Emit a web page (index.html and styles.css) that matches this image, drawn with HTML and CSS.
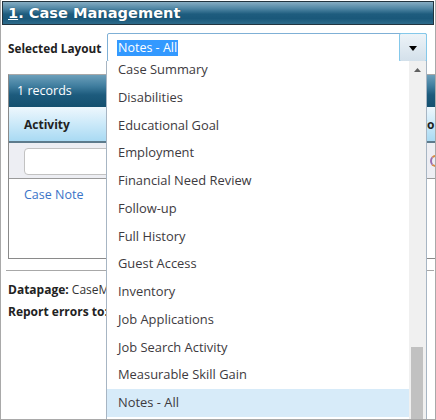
FILE: index.html
```html
<!DOCTYPE html>
<html>
<head>
<meta charset="utf-8">
<link rel="stylesheet" href="styles.css">
</head>
<body>
<div class="page">
  <div class="title"><span class="u">1</span>. Case Management</div>
  <div class="layout-row">
    <span class="label">Selected Layout</span>
    <div class="select">
      <span class="sel-text">Notes - All</span>
      <span class="btn"><svg width="8" height="5" viewBox="0 0 8 5"><path d="M0 0H8L4 5Z" fill="#000"/></svg></span>
    </div>
  </div>
  <div class="grid">
    <div class="grid-bar">1 records</div>
    <div class="grid-head"><div class="col1">Activity</div><div class="col2">To</div></div>
    <div class="grid-filter"><div class="col1"><div class="filter-input"></div></div><div class="col2"><span class="clear-icon"></span></div></div>
    <div class="grid-row"><a class="link">Case Note</a></div>
  </div>
  <div class="sep"></div>
  <div class="footer">
    <div class="fline"><b>Datapage:</b> CaseM</div>
    <div class="fline"><b>Report errors to:</b></div>
  </div>
  <div class="dropdown">
    <div class="list-view">
      <div class="items">
        <div class="item">Case Summary</div>
        <div class="item">Disabilities</div>
        <div class="item">Educational Goal</div>
        <div class="item">Employment</div>
        <div class="item">Financial Need Review</div>
        <div class="item">Follow-up</div>
        <div class="item">Full History</div>
        <div class="item">Guest Access</div>
        <div class="item">Inventory</div>
        <div class="item">Job Applications</div>
        <div class="item">Job Search Activity</div>
        <div class="item">Measurable Skill Gain</div>
        <div class="item active">Notes - All</div>
      </div>
    </div>
    <div class="scroll">
      <div class="arrow"><svg width="7" height="4" viewBox="0 0 7 4"><path d="M0 4L3.5 0L7 4Z" fill="#606060"/></svg></div>
      <div class="thumb"></div>
    </div>
  </div>
</div>
</body>
</html>
```
FILE: styles.css
```css
* { box-sizing: border-box; }
html, body { margin: 0; padding: 0; background: #fff; }
body { font-family: "Open Sans", "Liberation Sans", sans-serif; color: #333; }

.page {
  position: relative;
  width: 436px;
  height: 420px;
  border: 1px solid #a9a9a9;
  border-top: 0;
  padding: 1px 1px 0;
  overflow: hidden;
  background: #fff;
}

.title {
  height: 24px;
  border: 1px solid #22343f;
  background: linear-gradient(to bottom, #86adc3 0%, #4f86a4 30%, #1e5c7e 55%, #1a587a 75%, #2d6b8b 100%);
  color: #fff;
  font-family: "DejaVu Sans", Verdana, sans-serif;
  font-weight: bold;
  font-size: 14.6px;
  line-height: 22px;
  padding-left: 5px;
  text-shadow: 0 0 1px #0c3348;
}
.title .u { text-decoration: underline; }

.layout-row {
  display: flex;
  align-items: center;
  margin-top: 8px;
  height: 29px;
}
.label {
  width: 105px;
  padding-left: 6px;
  font-weight: bold;
  font-size: 11.8px;
  color: #222;
}
.select {
  width: 320px;
  height: 29px;
  border: 1px solid #7fb0d6;
  border-radius: 2px;
  display: flex;
  align-items: center;
  padding-left: 9px;
}
.sel-text {
  background: #3399ff;
  color: #fff;
  font-size: 12.5px;
  line-height: 16px;
  padding: 0 1px;
}
.btn {
  margin: -1px -1px -1px auto;
  width: 28px;
  height: 29px;
  border: 1px solid #84c8ea;
  border-radius: 2px;
  background: linear-gradient(to bottom, #edf3f8, #d3e0ea);
  display: flex;
  align-items: center;
  justify-content: center;
  padding-top: 1px;
}
.btn svg { display: block; }

.grid {
  margin: 12px -20px 0 6px;
  border: 1px solid #8a8a8a;
  border-top-color: #a8a8a8;
}
.grid-bar {
  height: 32px;
  line-height: 32px;
  padding-left: 8px;
  color: #fff;
  font-size: 12.5px;
  background: linear-gradient(to bottom, #6c9fba 0%, #3f7d9e 35%, #1d5b7d 62%, #14506f 100%);
}
.grid-head {
  display: flex;
  height: 36px;
  align-items: center;
  background: linear-gradient(to bottom, #eef7fd 0%, #cbe9f9 50%, #a9daf3 100%);
  border-bottom: 2px solid #5d7b8c;
  font-weight: bold;
  font-size: 12px;
  color: #222;
}
.col1 { width: 405px; padding-left: 15px; }
.col2 { padding-left: 6px; flex: 1; }
.grid-filter {
  display: flex;
  align-items: center;
  height: 36px;
  background: #edeef3;
  border-bottom: 1px solid #9a9a9a;
}
.filter-input {
  height: 27px;
  width: 380px;
  margin-top: 2px;
  border: 1px solid #c2c2c2;
  border-radius: 4px;
  background: #fff;
}
.clear-icon {
  display: block;
  width: 12px;
  height: 12px;
  margin-left: 10px;
  border: 2px solid #d88a46;
  border-left-color: #9a6fb0;
  border-radius: 50%;
}
.grid-row {
  height: 79px;
  padding: 3px 0 0 15px;
  background: #fff;
}
.link {
  color: #3a74c8;
  font-size: 12.5px;
  line-height: 20px;
}

.sep {
  margin: 11px 0 0 4px;
  border-top: 1px solid #a8a8a8;
}
.footer {
  padding: 8px 0 0 6px;
  font-size: 12px;
  line-height: 22px;
  color: #333;
}
.fline {
  width: 98px;
  overflow: hidden;
  white-space: nowrap;
}
.footer b { color: #222; }

.dropdown {
  position: absolute;
  left: 105px;
  top: 61px;
  width: 321px;
  height: 380px;
  border: 1px solid #a7b5c3;
  border-top: 0;
  background: #fff;
  display: flex;
}
.list-view {
  width: 302px;
  overflow: hidden;
}
.items { margin-top: -5px; }
.item {
  height: 27.75px;
  line-height: 27.75px;
  padding-left: 11px;
  font-size: 12.9px;
  color: #3d3a40;
  white-space: nowrap;
}
.item.active { background: #d7ebf9; }
.scroll {
  width: 17px;
  background: #f0f0f0;
  display: flex;
  flex-direction: column;
}
.arrow {
  height: 22px;
  display: flex;
  align-items: center;
  justify-content: center;
}
.arrow svg { display: block; }
.thumb {
  margin: 269px 0 0 2px;
  width: 12px;
  height: 120px;
  background: #c1c1c1;
}
```
